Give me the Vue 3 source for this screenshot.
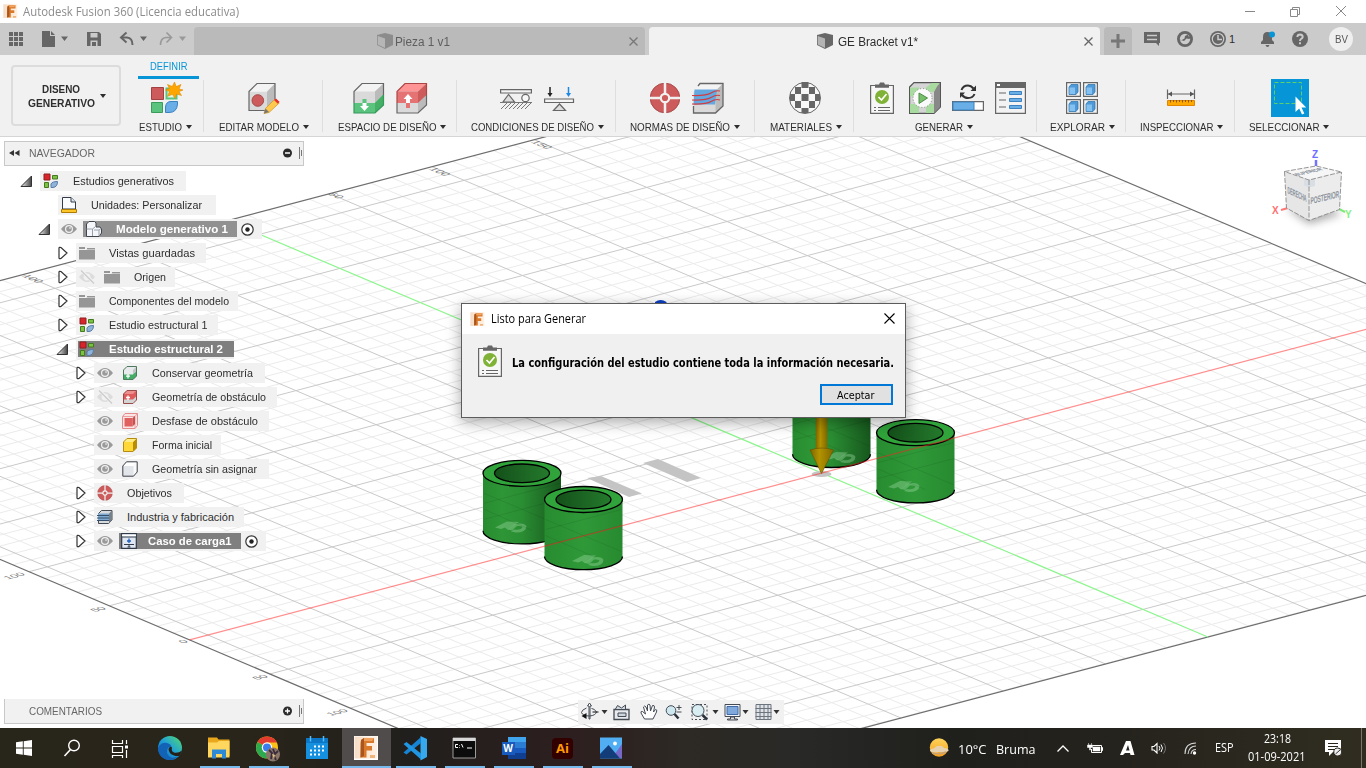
<script setup>
// Stretches a text run to an exact advance width while keeping its box in the flow.
const vFit = {
  mounted(el, { value }) {
    if (!value) return
    const natural = el.getBoundingClientRect().width
    el.style.display = 'inline-block'
    el.style.width = value + 'px'
    el.style.transformOrigin = '0 50%'
    el.style.transform = `scaleX(${value / natural})`
  },
}

const groups = [
  { label: 'ESTUDIO', w: 76, t: 43, dx: -0.5, icons: ['study'] },
  { label: 'EDITAR MODELO', w: 119, t: 80, dx: 1, icons: ['edit'] },
  { label: 'ESPACIO DE DISEÑO', w: 134, t: 98.5, dx: 2.5, icons: ['preserve', 'obstacle'] },
  { label: 'CONDICIONES DE DISEÑO', w: 159, t: 123, dx: 1, icons: ['support', 'load'] },
  { label: 'NORMAS DE DISEÑO', w: 139, t: 100, dx: 0, icons: ['target', 'manuf'] },
  { label: 'MATERIALES', w: 99, t: 62, dx: 1.5, icons: ['material'] },
  { label: 'GENERAR', w: 183, t: 48, dx: -1, icons: ['clip', 'generate', 'progress', 'status'] },
  { label: 'EXPLORAR', w: 89, t: 55, dx: 1.5, icons: ['explore'] },
  { label: 'INSPECCIONAR', w: 109, t: 73.5, dx: 1.5, icons: ['measure'] },
  { label: 'SELECCIONAR', w: 108, t: 70.5, dx: 0, icons: ['select'] },
]

const rows = [
  { x: 40, arrow: 'open', w: 146, icon: 'gen', text: 'Estudios generativos', t: 101 },
  { x: 58, w: 158, icon: 'doc', text: 'Unidades: Personalizar', t: 111 },
  { x: 58, arrow: 'open', w: 204, eye: 'eye', icon: 'assembly', text: 'Modelo generativo 1', t: 112, sel: 154, tone: 'mid', radio: true },
  { x: 76, arrow: 'closed', w: 130, icon: 'folder', text: 'Vistas guardadas', t: 86 },
  { x: 76, arrow: 'closed', w: 99, eye: 'eyeoff', icon: 'folder', text: 'Origen', t: 32 },
  { x: 76, arrow: 'closed', w: 162, icon: 'folder', text: 'Componentes del modelo', t: 120 },
  { x: 76, arrow: 'closed', w: 142, icon: 'gen', text: 'Estudio estructural 1', t: 98.5 },
  { x: 76, arrow: 'open', w: 158, icon: 'gen', text: 'Estudio estructural 2', t: 114, sel: 156, tone: 'dark', root: true },
  { x: 94, arrow: 'closed', w: 171, eye: 'eye', icon: 'tpreserve', text: 'Conservar geometría', t: 101 },
  { x: 94, arrow: 'closed', w: 183, eye: 'eyeoff', icon: 'tobstacle', text: 'Geometría de obstáculo', t: 114 },
  { x: 94, w: 175, eye: 'eye', icon: 'toffset', text: 'Desfase de obstáculo', t: 106 },
  { x: 94, w: 127, eye: 'eye', icon: 'tyellow', text: 'Forma inicial', t: 60 },
  { x: 94, w: 175, eye: 'eye', icon: 'twhite', text: 'Geometría sin asignar', t: 105 },
  { x: 94, arrow: 'closed', w: 90, icon: 'target', text: 'Objetivos', t: 45 },
  { x: 94, arrow: 'closed', w: 150, icon: 'tmanuf', text: 'Industria y fabricación', t: 107 },
  { x: 94, arrow: 'closed', w: 172, eye: 'eye', icon: 'tload', text: 'Caso de carga1', t: 83.5, sel: 122, tone: 'dark', radio: true, tight: true },
]

const apps = [
  { icon: 'edge' }, { icon: 'explorer', run: true }, { icon: 'chrome', run: true },
  { icon: 'calendar' }, { icon: 'fusion', run: true, active: true }, { icon: 'vscode', run: true },
  { icon: 'cmd', run: true }, { icon: 'word', run: true }, { icon: 'ai', run: true }, { icon: 'photos', run: true },
]

// Ground plane in viewport coordinates: O is the origin, U runs along the red axis, V along the green one.
const O = [821.7, 336]
const U = [102.3, -27]
const V = [80.3, 34.1]
const uMin = -6.18, uMax = 5.97, vMin = -7.4, vMax = 4.81
const at = (u, v) => [O[0] + u * U[0] + v * V[0], O[1] + u * U[1] + v * V[1]]
const seg = (a, b) => `M${a[0].toFixed(1)} ${a[1].toFixed(1)}L${b[0].toFixed(1)} ${b[1].toFixed(1)}`
let minor = ''
let major = ''
for (let i = -37; i <= 30; i++) {
  const k = i / 5
  if (k > uMin && k < uMax) {
    const s = seg(at(k, vMin), at(k, vMax))
    if (i % 5) minor += s
    else if (i) major += s
  }
  if (k > vMin && k < vMax) {
    const s = seg(at(uMin, k), at(uMax, k))
    if (i % 5) minor += s
    else if (i) major += s
  }
}
const edges = seg(at(uMin, vMin), at(uMax, vMin)) + seg(at(uMax, vMin), at(uMax, vMax)) +
  seg(at(uMax, vMax), at(uMin, vMax)) + seg(at(uMin, vMax), at(uMin, vMin))
const red = seg(at(uMin, 0), at(uMax, 0))
const green = seg(at(0, vMin), at(0, vMax))

const sideLabels = [
  { s: '100', x: 8, y: 442.5 }, { s: '50', x: 95, y: 475 }, { s: '0', x: 183, y: 506.5 },
  { s: '50', x: 257, y: 543 }, { s: '100', x: 331, y: 579 },
]
const topLabels = [
  { s: '100', x: 21, y: 139 }, { s: '50', x: 327, y: 57 }, { s: '100', x: 428, y: 32 }, { s: '150', x: 530, y: 5 },
]

const cylinders = [
  { x: 831.5, top: 257, bottom: 317.3, mx: 840, my: 321 },
  { x: 915.5, top: 295.7, bottom: 352.7, mx: 904, my: 350 },
  { x: 522, top: 336.3, bottom: 393.7, mx: 511, my: 390.5 },
  { x: 583.5, top: 362.5, bottom: 419.5, mx: 588, my: 424 },
]
const body = (c) => `M${c.x - 39} ${c.top}V${c.bottom}A39 13.2 0 0 0 ${c.x + 39} ${c.bottom}V${c.top}Z`
</script>

<template>
  <div class="app">
    <svg class="defs" width="0" height="0">
      <defs>
        <linearGradient id="cyl"><stop offset="0" stop-color="#278c30" /><stop offset=".25" stop-color="#2e9636" /><stop offset=".5" stop-color="#2a8d33" /><stop offset="1" stop-color="#17571d" /></linearGradient>
        <linearGradient id="cyl2"><stop offset="0" stop-color="#278c30" /><stop offset=".5" stop-color="#2f9938" /><stop offset="1" stop-color="#278a30" /></linearGradient>
        <linearGradient id="hole"><stop offset="0" stop-color="#14501a" /><stop offset="1" stop-color="#247a2c" /></linearGradient>
        <linearGradient id="gold"><stop offset="0" stop-color="#7d6500" /><stop offset=".4" stop-color="#b39300" /><stop offset="1" stop-color="#806700" /></linearGradient>
        <linearGradient id="edgeg" x1="0" y1="1" x2="1" y2="0"><stop offset="0" stop-color="#0f5fb5" /><stop offset=".5" stop-color="#1f9fd8" /><stop offset="1" stop-color="#54dc6c" /></linearGradient>
        <linearGradient id="tri" x1="0" x2="1"><stop offset="0" stop-color="#eee" /><stop offset="1" stop-color="#444" /></linearGradient>
        <linearGradient id="fus" x1="0" x2="1"><stop offset="0" stop-color="#f7dcc5" /><stop offset="1" stop-color="#fff1e4" /></linearGradient>
        <linearGradient id="sun" x1="0" y1="0" x2="0" y2="1"><stop offset="0" stop-color="#ffd35a" /><stop offset="1" stop-color="#f5a01d" /></linearGradient>
      </defs>
      <symbol id="caret" viewBox="0 0 6 4"><path d="M0 0H6L3 4Z" fill="currentColor" /></symbol>
      <symbol id="cubelet" viewBox="0 0 16 16"><path d="M0 2L8 0L16 2V12L8 16L0 12Z" fill="#686868" /><path d="M.7 3L8 5.500V15L.7 11.5Z" fill="#b4b4b4" /></symbol>
      <symbol id="study" viewBox="0 0 32 32">
        <path d="M.5 5.500h12v12h-12z" fill="#cd5b5b" stroke="#a34040" /><path d="M.5 20.500h11v10h-11z" fill="#5ac37d" stroke="#3a9c5a" /><path d="M15.500 6.500h10v10h-10z" fill="#dff5e5" stroke="#5ac37d" stroke-width="2" />
        <path d="M14.500 30.500V25Q15 19.500 20 19.500H26.500V22Q26 30.500 18 30.500Z" fill="#69aee6" stroke="#3c82c0" />
        <path d="M23.500 0l1.700 4.600L30 2.500l-2 4.500 4 1-4 1.500 2.500 4-5-1.500-1.500 4.500-2.500-4.200-5 2 2-4.800-4-1.500 4-1.500-2-4 4.800 2z" fill="#ffa500" stroke="#e08a00" stroke-width=".6" />
      </symbol>
      <symbol id="edit" viewBox="0 0 32 32">
        <path d="M1 9.500H19V28.500H1Z" fill="#dadada" /><path d="M1 9.500L9 1.500H27L19 9.500Z" fill="#f3f3f3" /><path d="M27 1.500V20L19 28.500V9.500Z" fill="#bbb" /><path d="M1 9.500L9 1.500H27V20L19 28.500H1Z" fill="none" stroke="#666" stroke-width="1.200" />
        <circle cx="9.800" cy="18.500" r="5.800" fill="#cd5b5b" stroke="#a34848" /><path d="M16 31.500L17.500 26.500L27 17L31.200 21L21 30.500Z" fill="#ffc94d" stroke="#d09a2a" stroke-width=".8" /><path d="M26 18l2-1.500 3.500 3.300-1.700 2z" fill="#e8302a" /><path d="M16 31.500l1.500-5 3.500 3.600z" fill="#777" />
      </symbol>
      <symbol id="preserve" viewBox="0 0 32 32">
        <path d="M1 9.500L9 1.500H30.500V23L22 31H1Z" fill="#dadada" /><path d="M1 9.500L9 1.500H30.500L22 9.500Z" fill="#f3f3f3" /><path d="M30.500 1.500V23L22 31V9.500Z" fill="#bbb" /><path d="M1 21H22L30.500 12.500V23L22 31H1Z" fill="#5ac37d" /><path d="M22 21L30.500 12.500V23L22 31Z" fill="#43b065" /><path d="M1 21V9.500L9 1.500H30.500V13" fill="none" stroke="#666" stroke-width="1.200" /><path d="M1 21V31H22L30.500 23V13" fill="none" stroke="#35995a" stroke-width="1.200" /><path d="M9.500 17h4v4h-4z" fill="#5ac37d" /><path d="M9.500 21h4v3h2.500l-4.500 5-4.500-5h2.500z" fill="#fff" />
      </symbol>
      <symbol id="obstacle" viewBox="0 0 32 32">
        <path d="M1 9.500L9 1.500H30.500V23L22 31H1Z" fill="#dadada" /><path d="M22 21L30.500 13V23L22 31Z" fill="#bbb" /><path d="M1 9.500L9 1.500H30.500L22 9.500Z" fill="#ff9494" /><path d="M1 9.500H22V21H1Z" fill="#e67373" /><path d="M30.500 1.500V13L22 21V9.500Z" fill="#cd5b5b" /><path d="M1 21V31H22L30.500 23V13" fill="none" stroke="#666" stroke-width="1.200" /><path d="M1 21V9.500L9 1.500H30.500V13" fill="none" stroke="#ad4545" stroke-width="1.200" /><path d="M10 21h4v5h-4z" fill="#e67373" /><path d="M10 21h4v-4h2.500L12 12l-4.500 5h2.500z" fill="#fff" />
      </symbol>
      <symbol id="support" viewBox="0 0 32 32"><path d="M.6 7.600H31.400V11H.6Z" fill="#f5f5f5" stroke="#666" stroke-width="1.200" /><path d="M8.500 12.500L3 20H14.500Z" fill="#ddd" stroke="#666" stroke-width="1.200" /><circle cx="25.500" cy="16" r="3.700" fill="#f8f8f8" stroke="#666" stroke-width="1.200" /><path d="M0 20.500H32M1 27l6-6M5 27l6-6M9 27l6-6M13 27l6-6M17 27l6-6M21 27l6-6M25 27l6-6" fill="none" stroke="#777" /></symbol>
      <symbol id="load" viewBox="0 0 32 32"><path d="M1.600 17H30.500V20.500H1.600Z" fill="#f5f5f5" stroke="#666" stroke-width="1.200" /><path d="M16.500 22L10.500 28.500H22.500Z" fill="#ddd" stroke="#666" stroke-width="1.200" /><path d="M7 5V12" stroke="#222" stroke-width="1.500" /><path d="M4.500 11h5l-2.500 4z" fill="#222" /><path d="M25.500 5V12" stroke="#1e88e5" stroke-width="1.500" /><path d="M23 11h5l-2.500 4z" fill="#1e88e5" /></symbol>
      <symbol id="target" viewBox="0 0 32 32"><circle cx="16" cy="16" r="14.800" fill="#cd5b5b" stroke="#a84a4a" stroke-width="1" /><path d="M16 0V32M0 16H32" stroke="#f1f1f1" stroke-width="2.500" /><circle cx="16" cy="16" r="4.200" fill="#cd5b5b" stroke="#f1f1f1" stroke-width="2.200" /></symbol>
      <symbol id="manuf" viewBox="0 0 32 32"><path d="M1.500 10L8 1.500H31V24L23.500 31H1.500Z" fill="#dadada" /><path d="M1.500 9L8 1.500H31L23.500 9Z" fill="#f3f3f3" /><path d="M23.500 9L31 1.500V24L23.500 31Z" fill="#bbb" /><path d="M6 4L8 1.500H31V24L23.500 31H1.500V24" fill="none" stroke="#666" stroke-width="1.300" /><path d="M2.500 7.500H25L23 22.500H1.500Z" fill="#64a8e0" /><path d="M0 13.500Q14 14 19 11T28 9M0 18Q14 18.500 19 15.500T28 13.500M0 22Q14 22.500 19 19.500T28 18" fill="none" stroke="#cf3d42" stroke-width="1.200" /></symbol>
      <symbol id="material" viewBox="0 0 32 32"><circle cx="16" cy="16" r="15.500" fill="#f7f7f7" stroke="#666" /><path d="M12.500 0h7v6h-7zM6 5h6v7H6zM20 5h6v7h-6zM1 12h5v7H1zM12.500 12h7v7h-7zM26 12h5v7h-5zM6 19h6v7H6zM20 19h6v7h-6zM12.500 26h7v5h-7z" fill="#666" /></symbol>
      <symbol id="clip" viewBox="0 0 32 32"><path d="M4.600 3.500H27.400V31.400H4.600Z" fill="#f7f7f7" stroke="#666" stroke-width="1.200" /><path d="M9 2.500h4l1-2h4l1 2h4v3.300H9z" fill="#666" /><circle cx="16" cy="15" r="7" fill="#7fb236" /><path d="M12.500 15l3 3 5-6" fill="none" stroke="#fff" stroke-width="1.700" /><path d="M8 25.500h2M8 28.500h2M12 25.500H24M12 28.500H24" stroke="#666" stroke-width="1.200" /></symbol>
      <symbol id="generate" viewBox="0 0 32 32"><path d="M.6 5L5 .6H31.400V25L25 31.400H.6Z" fill="#d5d5d5" stroke="#555" stroke-width="1.200" /><path d="M25 7L31 1V25L25 31Z" fill="#888" /><path d="M1 5.500h9v9H1zM17 5.500l6-4.500h7l-5 9h-8zM1 22h9v9H1zM17 22h8v9h-8z" fill="#a9dba0" /><circle cx="13.500" cy="16" r="9.500" fill="#fafafa" stroke="#888" stroke-dasharray="1 2" /><path d="M10 11L18.500 16L10 21.500Z" fill="#78bf6b" stroke="#4d8c44" /></symbol>
      <symbol id="progress" viewBox="0 0 32 32"><path d="M.6 19.600H31.400V28.400H.6Z" fill="#fff" stroke="#666" stroke-width="1.200" /><path d="M1 20H22V28H1Z" fill="#69aee6" stroke="#3c82c0" /><path d="M9.500 8Q11 3.500 16 3.500Q19 3.500 21.500 6.500M22.500 12Q21 16 16 16Q12.500 16 10 13" fill="none" stroke="#333" stroke-width="2" /><path d="M18.500 9h5.500V3.500zM13 10.500H8V16z" fill="#333" /></symbol>
      <symbol id="status" viewBox="0 0 32 32"><path d="M.6 .6H30.400V31.400H.6Z" fill="#f3f3f3" stroke="#666" stroke-width="1.200" /><path d="M0 0H31V6H0Z" fill="#666" /><path d="M2 2h3v2H2z" fill="#fff" /><path d="M4 11h7M4 18h7M4 25h7" stroke="#666" stroke-width="1.200" /><path d="M14.500 9.500h12v3h-12zM14.500 16.500h12v3h-12zM14.500 23.500h12v3h-12z" fill="#69aee6" stroke="#3c82c0" /></symbol>
      <symbol id="explore" viewBox="0 0 32 32"><g v-for="(p, i) in [[0, 0], [17, 0], [0, 17], [17, 17]]" :key="i" :transform="`translate(${p[0]} ${p[1]})`"><path d="M.6 .6H14.400V14.400H.6Z" fill="#f4f4f4" stroke="#666" stroke-width="1.200" /><path d="M3 5l2-2.500h7V10l-2 2.500H3z" fill="#4e9ad8" stroke="#3577b0" stroke-width=".8" /><path d="M3.500 5.500H9V12H3.500z" fill="#84c0f0" /></g></symbol>
      <symbol id="measure" viewBox="0 0 32 32"><path d="M2.500 7.500V17M29.500 7.500V17M3 12H29" stroke="#666" stroke-width="1.200" /><path d="M3 12l4-2.500v5zM29 12l-4-2.500v5z" fill="#555" /><path d="M2.500 18.500H29.500V23.500H2.500Z" fill="#ffa800" stroke="#e08600" /><path d="M5.500 18v2.500M8.500 18v2M11.500 18v2.500M14.500 18v2M17.500 18v2.500M20.500 18v2M23.500 18v2.500M26.500 18v2" stroke="#8a5a00" /></symbol>
      <symbol id="select" viewBox="0 0 38 38"><path d="M0 0H38V38H0Z" fill="#0696d7" /><path d="M3.500 3.500H30.500V24.500H3.500Z" fill="none" stroke="#5fd068" stroke-dasharray="4 2" /><path d="M24.500 17.500V33l3.700-3.500 2.800 6 2.300-1-2.800-6h4.700z" fill="#fff" /></symbol>

      <symbol id="gen" viewBox="0 0 16 16"><path d="M1 1h6v6h-6z" fill="#d8242a" stroke="#8c2020" /><path d="M9.500 2.500h5v3.500h-5z" fill="#7bc143" stroke="#467a20" /><path d="M1.500 9.500h4v5h-4z" fill="#7bc143" stroke="#467a20" /><path d="M8 14.500V11Q9 8.500 14.500 8.500Q14.500 14 10 14.500Z" fill="#8fb4dc" stroke="#5a7ca6" /></symbol>
      <symbol id="doc" viewBox="0 0 16 16"><path d="M1.500 .5H10L14.500 5V12H1.500Z" fill="#fafcff" stroke="#333d4a" /><path d="M10 .5V5H14.500" fill="#dce6f2" stroke="#333d4a" /><path d="M.5 12.500H15.500V15.500H.5Z" fill="#ffc629" stroke="#b07c00" /></symbol>
      <symbol id="assembly" viewBox="0 0 16 16"><path d="M.5 3L3 .5H8.500L10 2V6H14L15.500 8V12L13 15.500H.5Z" fill="#f4f6fa" stroke="#404650" /><path d="M.5 8H6.500V15M6.500 8L9 6M8 9H13L15 7.500M13 9V15" fill="none" stroke="#9aa0aa" /></symbol>
      <symbol id="folder" viewBox="0 0 16 16"><path d="M0 2H6V4H0ZM8 3H16V4H8ZM0 5H7L9 4.500H16V14.500H0Z" fill="#969696" /></symbol>
      <symbol id="eye" viewBox="0 0 16 16"><path d="M0 8Q8-2 16 8Q8 18 0 8Z" fill="#9a9a9a" /><circle cx="8" cy="8" r="4" fill="#f1f1f1" /><circle cx="8" cy="8" r="2.800" fill="#9a9a9a" /><circle cx="9" cy="7" r=".8" fill="#fff" /></symbol>
      <symbol id="eyeoff" viewBox="0 0 16 16"><path d="M0 8Q8-2 16 8Q8 18 0 8Z" fill="#dcdcdc" /><circle cx="8" cy="8" r="3.400" fill="#f1f1f1" /><path d="M2 1L15 14" stroke="#f1f1f1" stroke-width="3" /><path d="M2 1.500L15 14.500" stroke="#ccc" stroke-width="1.200" /></symbol>
      <symbol id="tpreserve" viewBox="0 0 16 16"><path d="M1.500 5L5 1.500H14.500V11L11 14.500H1.500Z" fill="#e8eaec" /><path d="M11 5L14.500 1.500V11L11 14.500Z" fill="#c2c4c6" /><path d="M1.500 9.500H11L14.500 6.500V11L11 14.500H1.500Z" fill="#45ad68" /><path d="M1.500 5L5 1.500H14.500V11L11 14.500H1.500Z" fill="none" stroke="#4b7a5c" /><path d="M6 9v4.500M4 11.200h4" stroke="#fff" stroke-width="1.200" /></symbol>
      <symbol id="tobstacle" viewBox="0 0 16 16"><path d="M1.500 5L5 1.500H14.500V11L11 14.500H1.500Z" fill="#d4d4d4" /><path d="M1.500 5L5 1.500H14.500V7L11 10.500H1.500Z" fill="#de5b5b" /><path d="M1.500 5L5 1.500H14.500L11 5Z" fill="#ee8d8d" /><path d="M1.500 5L5 1.500H14.500V11L11 14.500H1.500Z" fill="none" stroke="#9b4a4a" /><path d="M6 6.500v4.500M4 8.500h4" stroke="#fff" stroke-width="1.300" /></symbol>
      <symbol id="toffset" viewBox="0 0 16 16"><path d="M.5 3.500L3 .5H15.500V12.500L13 15.500H.5Z" fill="#fbe6e6" stroke="#e58a8a" /><path d="M.5 3.500H13V15.500M13 3.500L15.500 .5" fill="none" stroke="#e9a0a0" /><path d="M2.500 5H10.500V13.500H2.500Z" fill="#e06060" /><path d="M10.500 5L13 3V11L10.500 13.500Z" fill="#c85050" /></symbol>
      <symbol id="tyellow" viewBox="0 0 16 16"><path d="M1.500 5L5 1.500H14.500V11L11 14.500H1.500Z" fill="#ffd838" /><path d="M11 5L14.500 1.500V11L11 14.500Z" fill="#b88e00" /><path d="M1.500 5L5 1.500H14.500L11 5Z" fill="#ffec86" /><path d="M1.500 5L5 1.500H14.500V11L11 14.500H1.500Z" fill="none" stroke="#b38c10" /></symbol>
      <symbol id="twhite" viewBox="0 0 16 16"><path d="M.8 5L4.500 .8H15.200V11L11.500 15.200H.8Z" fill="#e2e5ea" /><path d="M.8 5L4.500 .8H15.200L11.500 5Z" fill="#fff" /><path d="M11.500 5L15.200 .8V11L11.500 15.200Z" fill="#fafafa" /><path d="M.8 5L4.500 .8H15.200V11L11.500 15.200H.8Z" fill="none" stroke="#3a3f47" /></symbol>
      <symbol id="tmanuf" viewBox="0 0 16 16"><path d="M1.500 4.500L4.500 1.500H15V11L11.500 14.500H1.500Z" fill="#d8dadd" stroke="#444b55" /><path d="M12 4.500L15 1.500V11L12 14.500Z" fill="#777f88" /><path d="M1 4.500H12V12H1Z" fill="#7fa8cf" /><path d="M0 6.500H12M0 9H12M0 11.500H12" stroke="#34506e" /></symbol>
      <symbol id="tload" viewBox="0 0 16 16"><path d="M.7 .7H15.300V15.300H.7Z" fill="#dfe7f2" stroke="#2f3a48" stroke-width="1.200" /><path d="M1 2.500H15" stroke="#fff" stroke-width="2" /><path d="M1 4H15" stroke="#2f3a48" /><path d="M8 5.500V10M6 8H10" fill="none" stroke="#1c5fc0" stroke-width="1.300" /><path d="M3 11.500H13M8 12V14M6.500 14H9.500" stroke="#2f3a48" fill="none" /></symbol>

      <symbol id="win" viewBox="0 0 32 32"><path d="M8 10.300L14.800 9.300V15.500H8ZM15.700 9.200L24 8V15.500H15.700ZM8 16.400H14.800V22.700L8 21.700ZM15.700 16.400H24V24L15.700 22.800Z" fill="#fff" /></symbol>
      <symbol id="search" viewBox="0 0 32 32"><circle cx="18" cy="13.500" r="5.300" fill="none" stroke="#fff" stroke-width="1.400" /><path d="M14.500 17.500L8.500 24" stroke="#fff" stroke-width="1.600" /></symbol>
      <symbol id="taskview" viewBox="0 0 32 32"><path d="M8.500 8V11.500H18.500V8M8.500 14.500H18.500V20.500H8.500ZM8.500 26V23.500H18.500V26M22.500 8V12M22.500 18V26" fill="none" stroke="#fff" stroke-width="1.200" /><path d="M21 13.500h3v3h-3z" fill="#fff" /></symbol>
      <symbol id="edge" viewBox="0 0 32 32"><circle cx="16" cy="16" r="12" fill="url(#edgeg)" /><path d="M4 16Q7 10 13 11Q17 12 17.500 15Q16 14 14 16Q11 21 16 25Q19 27 24 24Q21 28 16 28Q5 27.500 4 16Z" fill="#1262b5" /><path d="M14.500 17Q16 13.500 18 15.500Q17 19.500 20 20.500Q24 21.500 28 18.500L26 23.500Q23 24.500 20 23.500Q15 22 14.500 17Z" fill="#252119" /></symbol>
      <symbol id="explorer" viewBox="0 0 32 32"><path d="M5 5.500H14L15.500 7.500H26.500V24H5Z" fill="#e9a81c" /><path d="M5 10.500H14L16 9H26.500V25.500H5Z" fill="#ffd75e" /><path d="M9 26.500V17.500H23V26.500H19V22H13V26.500Z" fill="#2f8ad6" /></symbol>
      <symbol id="chrome" viewBox="0 0 32 32"><circle cx="15" cy="15.500" r="11" fill="#fbc116" /><path d="M15 15.500L5.500 10Q8.500 4.500 15 4.500Q22 4.500 25 10.500H15Z" fill="#e33b2e" /><path d="M15 15.500L5.500 10Q2 17 6.500 22.500Q10 26.500 14.500 26.500L19 18Z" fill="#2da94f" /><circle cx="15" cy="15.500" r="5.200" fill="#fff" /><circle cx="15" cy="15.500" r="4" fill="#3b7ded" /><circle cx="21" cy="22.500" r="7" fill="#8a7568" /><path d="M17 18l3 3-1 6M21 17l2 5 3-3M22 24l2 4" stroke="#392b3c" stroke-width="1.800" fill="none" /><path d="M20 22l3 1-1 4z" fill="#dec07e" /></symbol>
      <symbol id="calendar" viewBox="0 0 32 32"><path d="M5 6H27V27H5Z" fill="#1490df" /><path d="M5 6H27V11H5Z" fill="#0b75c6" /><path d="M9.500 4V9.500M22.500 4V9.500" stroke="#55bdf5" stroke-width="1.500" /><path d="M13 14.500h11M9 18.500h15M9 22.500h11" stroke="#fff" stroke-width="2" stroke-dasharray="2 2" /></symbol>
      <symbol id="fusion" viewBox="0 0 32 32"><path d="M4 4H28V28H4Z" fill="#fff" /><path d="M4.500 4.500H27V26.500H4.500Z" fill="url(#fus)" /><path d="M11 8L14 6H24V11H16.500V14H22V18.500H16.500V25.500H10.500V11Z" fill="#d9792b" /><path d="M11 8L14 6V24L10.500 25.500Z" fill="#a9551d" /><path d="M14 6H24L22 9H14Z" fill="#f2a25f" /><path d="M20 23h5v3h-5z" fill="#efb47c" /></symbol>
      <symbol id="vscode" viewBox="0 0 32 32"><path d="M21.500 4L28 7V25L21.500 28.500Z" fill="#35a8ee" /><path d="M22 5V11L7.500 22.500L4.500 20.500Z" fill="#1684d3" /><path d="M22 27.500V21.500L7.500 10L4.500 12Z" fill="#2196e3" /></symbol>
      <symbol id="cmd" viewBox="0 0 32 32"><path d="M5 6H27.500V26H5Z" fill="#0c0c0c" stroke="#9b9b9b" /><path d="M5 6H27.500V9H5Z" fill="#d9d9d9" /><path d="M7.500 12.500h2.500M7.500 12.500v3h2.500M11.500 13v.6M11.500 15v.6M13.500 12l1.500 3.500M19 16h5" stroke="#fff" fill="none" /></symbol>
      <symbol id="photos" viewBox="0 0 32 32"><path d="M5 5.500H27V26.500H5Z" fill="#51aef2" /><path d="M27 12V26H17Z" fill="#7767c9" /><path d="M5 22L13.500 13L25 26.500H5Z" fill="#133d78" /><circle cx="20" cy="11.500" r="1.900" fill="#fff" /></symbol>
    </svg>

    <header class="title-bar">
      <svg class="fusion-mini" viewBox="4 4 24 24"><use href="#fusion" width="32" height="32" /></svg>
      <span v-fit="216" class="title">Autodesk Fusion 360 (Licencia educativa)</span>
      <svg class="win-btns" width="120" height="20" viewBox="0 0 120 20" fill="none" stroke="#888"><path d="M5 9.500H15M50.500 7.500H57.500V14.500H50.500ZM52.500 7.500V5.500H59.500V12.500H57.500M96 4L106 14M106 4L96 14" /></svg>
    </header>

    <div class="tab-bar">
      <svg class="quick" width="194" height="32" viewBox="0 0 194 32">
        <path d="M9 9h4v4H9zM14 9h4v4h-4zM19 9h4v4h-4zM9 14h4v4H9zM14 14h4v4h-4zM19 14h4v4h-4zM9 19h4v4H9zM14 19h4v4h-4zM19 19h4v4h-4z" fill="#666" />
        <path d="M42 8h8v5h5v11H42zM51 8l4 4h-4z" fill="#666" /><path d="M61 13.500h7l-3.500 4.500zM140 13.500h7l-3.500 4.500z" fill="#666" />
        <path d="M87 9h12l2 2v12H87z" fill="#666" /><path d="M90.500 10h7v4.500h-7zM90.500 23v-5.500h7V23" fill="#cbcbcb" /><path d="M92 19h4v4h-4z" fill="#666" />
        <path d="M121 14.500H127Q132.500 15 132.500 22" fill="none" stroke="#666" stroke-width="2" /><path d="M126.500 9.500L121 14.500L126.500 19.500" fill="none" stroke="#666" stroke-width="2" />
        <g stroke="#999" fill="none" stroke-width="1.600"><path d="M171 14.500H166Q160.500 15 160.500 22M166.500 9.500L171.500 14.500L166.500 19.500" /></g><path d="M179 13.500h7l-3.500 4.500z" fill="#999" />
      </svg>
      <div class="tab inactive">
        <svg class="tab-cube" width="16" height="16"><use href="#cubelet" width="16" height="16" /></svg>
        <span v-fit="55" class="tab-name">Pieza 1 v1</span>
        <svg class="tab-x" width="9" height="9" viewBox="0 0 9 9"><path d="M.5 .5L8.500 8.500M8.500 .5L.5 8.500" stroke="#777" stroke-width="1.300" /></svg>
      </div>
      <div class="tab current">
        <svg class="tab-cube" width="16" height="16"><use href="#cubelet" width="16" height="16" /></svg>
        <span v-fit="80" class="tab-name">GE Bracket v1*</span>
        <svg class="tab-x" width="9" height="9" viewBox="0 0 9 9"><path d="M.5 .5L8.500 8.500M8.500 .5L.5 8.500" stroke="#666" stroke-width="1.300" /></svg>
      </div>
      <div class="tab-add"><svg width="14" height="14" viewBox="0 0 14 14"><path d="M7 0V14M0 7H14" stroke="#777" stroke-width="3" /></svg></div>
      <div class="status-icons">
        <svg class="s-chat" width="16" height="16" viewBox="0 0 16 16"><path d="M0 1H16V12H15V15L12 12H0Z" fill="#666" /><path d="M3 4.500H13M3 8.500H13" stroke="#cbcbcb" stroke-width="1.500" /></svg>
        <svg class="s-ext" width="16" height="16" viewBox="0 0 16 16"><circle cx="8" cy="8" r="6.600" fill="none" stroke="#666" stroke-width="2.800" /><path d="M1 8L7 10L9.500 7.500L12.500 8L14 5L11.500 5.500L11 3.500L8 5L7.500 7.500L4 9.500Z" fill="#666" /></svg>
        <svg class="s-clock" width="16" height="16" viewBox="0 0 16 16"><circle cx="8" cy="8" r="8" fill="#666" /><circle cx="8" cy="8" r="5.700" fill="none" stroke="#cbcbcb" stroke-width="1.200" /><path d="M8 4V8.500H12" fill="none" stroke="#cbcbcb" stroke-width="1.500" /></svg>
        <span class="count">1</span>
        <svg class="s-bell" width="17" height="16" viewBox="0 0 17 16"><path d="M1 13V11L3 9V6Q3 1 7.500 1Q12 1 12 6V9L14 11V13ZM5.500 14H9.500Q9 16 7.500 16Q6 16 5.500 14Z" fill="#666" /><circle cx="12" cy="3.500" r="3" fill="#0696d7" /></svg>
        <svg class="s-help" width="16" height="16" viewBox="0 0 16 16"><circle cx="8" cy="8" r="8" fill="#666" /><path d="M5.300 6Q5.500 3.500 8 3.500Q10.800 3.700 10.700 6Q10.500 7.200 9 8Q8 8.700 8 10" fill="none" stroke="#cbcbcb" stroke-width="1.900" /><path d="M7 11.200h2v2H7z" fill="#cbcbcb" /></svg>
        <span class="avatar"><span v-fit="13">BV</span></span>
      </div>
    </div>

    <div class="ribbon">
      <div class="workspace">
        <div class="ws-name"><span v-fit="38">DISENO</span><span v-fit="67">GENERATIVO</span></div>
        <svg class="caret" width="6" height="4"><use href="#caret" width="6" height="4" /></svg>
      </div>
      <div class="tools">
        <div class="define"><span v-fit="37.500">DEFINIR</span></div>
        <div class="groups">
          <div v-for="g in groups" :key="g.label" class="group" :style="{ width: g.w + 'px' }">
            <div class="group-icons">
              <svg v-for="i in g.icons" :key="i" :class="['tool', { big: i === 'select' }]"><use :href="'#' + i" width="100%" height="100%" /></svg>
            </div>
            <div class="group-label" :style="{ marginLeft: g.dx * 2 + 'px' }"><span v-fit="g.t">{{ g.label }}</span><svg class="caret" width="6" height="4"><use href="#caret" width="6" height="4" /></svg></div>
          </div>
        </div>
      </div>
    </div>

    <main class="viewport">
      <svg class="scene" width="1366" height="591" viewBox="0 0 1366 591">
        <path :d="minor" stroke="#ebebeb" />
        <path :d="major" stroke="#c9c9c9" />
        <path :d="edges" stroke="#6e6e6e" stroke-width="1.200" />
        <path d="M643 326L658 322L701 341L687 345Z" fill="#c4c4c4" /><path d="M587 341L601 339L642 356.500L629 360Z" fill="#c4c4c4" />
        <path :d="green" stroke="#8df58d" stroke-width="1.200" />
        <ellipse cx="821.500" cy="337" rx="10" ry="3" fill="#c4c4c4" />
        <g v-for="(c, i) in cylinders" :key="i">
          <path :d="body(c)" :fill="i % 2 ? 'url(#cyl2)' : 'url(#cyl)'" />
          <path :d="`M${c.x - 39} ${c.bottom}A39 13.200 0 0 0 ${c.x + 39} ${c.bottom}`" fill="none" stroke="#000" stroke-width="1.300" />
          <ellipse :cx="c.x" :cy="c.top" rx="39" ry="13" fill="#30a33a" stroke="#000" stroke-width="1.300" />
          <ellipse :cx="c.x" :cy="c.top" rx="27.500" ry="9.300" fill="url(#hole)" stroke="#000" stroke-width="1.300" />
          <g :transform="`translate(${c.mx} ${c.my})`" fill="#a4dca8" fill-opacity=".38"><path d="M-16 0L-4-6L8-5.500L0 0L-3 2.500L-6 0L-10 1.500Z" /><path d="M-3 2L4-3.500Q14-5 15.500-1Q15 5 5 5L0 4L3 2Q10 3 11.500-.5Q10-2 6-1.500L1 3Z" /></g>
          <path :d="`M${c.x - 38} ${c.top + 30}L${c.x + 38} ${c.top + 10}M${c.x - 38} ${c.top + 46}L${c.x + 38} ${c.top + 26}M${c.x - 38} ${c.top + 20}L${c.x + 38} ${c.top + 52}M${c.x - 38} ${c.top + 36}L${c.x + 10} ${c.top + 57}`" stroke="#000" stroke-opacity=".08" />
        </g>
        <path :d="red" stroke="#ff2020" stroke-opacity=".5" stroke-width="1.200" />
        <path d="M815.700 270H827.300V315H815.700Z" fill="url(#gold)" /><path d="M810 313Q822 309 833.500 313L821.500 336.500Z" fill="url(#gold)" stroke="#675300" stroke-width=".6" />
        <path d="M655 170V165Q660.500 161 666.500 165V170Z" fill="#0b3fc0" />
        <text v-for="(l, i) in sideLabels" :key="'s' + i" class="grid-label" :transform="`matrix(.9 -.24 .7 .3 ${l.x} ${l.y})`">{{ l.s }}</text>
        <text v-for="(l, i) in topLabels" :key="'t' + i" class="grid-label" :transform="`matrix(.85 .36 -.8 .22 ${l.x} ${l.y})`">{{ l.s }}</text>
      </svg>

      <svg class="viewcube" width="86" height="84" viewBox="1266 146 86 84">
        <defs><filter id="soft" x="-50%" y="-50%" width="200%" height="200%"><feGaussianBlur stdDeviation="4" /></filter></defs>
        <path d="M1286 208L1309 224L1342 214L1330 208Z" fill="#888" opacity=".7" filter="url(#soft)" />
        <path d="M1316 160V166" stroke="#7373ff" stroke-width="2.500" /><path d="M1281 210L1288 208" stroke="#ff7777" stroke-width="2" /><path d="M1339 209L1345 212" stroke="#7bea7b" stroke-width="2" />
        <path d="M1284.500 171.500L1316 166L1341.500 172L1309 180Z" fill="#f6f6f6" /><path d="M1284.500 171.500L1309 180V220.500L1286.500 208Z" fill="#e6e6e6" /><path d="M1309 180L1341.500 172L1339.500 209.500L1309 220.500Z" fill="#ececec" />
        <path d="M1304 178L1309 180L1315 178.500V186L1309 187.500L1304 185.500Z" fill="#d9dee4" />
        <path d="M1284.500 171.500L1316 166L1341.500 172L1309 180ZM1284.500 171.500L1286.500 208L1309 220.500L1339.500 209.500L1341.500 172M1309 180V220.500" fill="none" stroke="#8a8a8a" stroke-width=".9" stroke-dasharray="5 1.500" />
        <text class="face" transform="matrix(.43 .2 0 1 1287.500 193)">DERECHA</text><text class="face" transform="matrix(.54 -.13 0 1 1310.500 204)">POSTERIOR</text><text class="face" transform="matrix(.55 -.13 .5 .35 1297 176)">SUPERIOR</text>
        <text x="1312" y="158" class="axis z">Z</text><text x="1272" y="214" class="axis x">X</text><text x="1345" y="217.500" class="axis y">Y</text>
      </svg>

      <aside class="browser">
        <div class="panel-head">
          <svg class="collapse" width="11" height="6" viewBox="0 0 11 6"><path d="M5 0V6L0 3ZM10.500 0V6L5.500 3Z" fill="#333" /></svg>
          <span v-fit="66" class="panel-name">NAVEGADOR</span>
          <svg class="panel-btn" width="20" height="12" viewBox="0 0 20 12"><circle cx="4.500" cy="6" r="4.500" fill="#2b2b2b" /><path d="M2 6H7" stroke="#fff" stroke-width="1.500" /><path d="M16.500 0V12M18.500 3V9" stroke="#777" /></svg>
        </div>
        <div class="tree">
          <div v-for="r in rows" :key="r.text" class="row" :style="{ paddingLeft: r.x - 20 + 'px' }">
            <div class="twist">
              <svg v-if="r.arrow === 'closed'" width="13" height="14" viewBox="0 0 13 14"><path d="M3 2Q3 1 5 1.500L11 7L5 12.500Q3 13 3 12Z" fill="#fff" stroke="#333" stroke-width="1.200" /></svg>
              <svg v-else-if="r.arrow === 'open'" width="13" height="12" viewBox="0 0 13 12"><path d="M1 11.500L11.500 1V11.500Z" fill="url(#tri)" stroke="#333" /></svg>
            </div>
            <div class="node" :style="{ width: r.w + 'px' }">
              <svg v-if="r.eye" class="eye"><use :href="'#' + r.eye" width="16" height="16" /></svg>
              <div :class="['label', r.tone, { root: r.root, tight: r.tight }]" :style="{ width: r.sel ? r.sel + 'px' : 'auto' }">
                <svg class="node-icon"><use :href="'#' + r.icon" width="16" height="16" /></svg>
                <span v-fit="r.t">{{ r.text }}</span>
              </div>
              <svg v-if="r.radio" class="radio" width="13" height="13" viewBox="0 0 13 13"><circle cx="6.500" cy="6.500" r="5.700" fill="#fff" stroke="#333" stroke-width="1.200" /><circle cx="6.500" cy="6.500" r="2.200" fill="#222" /></svg>
            </div>
          </div>
        </div>
      </aside>

      <div class="panel-head comments">
        <span v-fit="73" class="panel-name">COMENTARIOS</span>
        <svg class="panel-btn" width="20" height="12" viewBox="0 0 20 12"><circle cx="4.500" cy="6" r="4.500" fill="#2b2b2b" /><path d="M2 6H7M4.500 3.500V8.500" stroke="#fff" stroke-width="1.300" /><path d="M16.500 0V12M18.500 3V9" stroke="#777" /></svg>
      </div>

      <div class="view-tools">
        <svg width="206" height="24" viewBox="578.500 700 206 24" fill="none" stroke="#444b55">
          <path d="M589.500 719V706H588L590 703L592 706H590.500V719Z" fill="#fff" /><path d="M587 708Q582 710 582 712.500Q583 716 590 716Q596 715.500 597 712Q595 708.500 592 708.500" /><path d="M582 716l5-3v6z" fill="#111" stroke="none" /><path d="M593 712h6" stroke="#111" />
          <g fill="#333" stroke="none"><path d="M602 710h6l-3 4zM713 710h6l-3 4zM743 710h6l-3 4zM774 710h6l-3 4z" /></g>
          <path d="M614.500 709.500H629.500V719.500H614.500Z" fill="#e8eaed" stroke-width="1.300" /><path d="M616 709L618 705.500L622 708L626 705V709M618.500 713H626.500V716.500H618.500Z" fill="#cfd5dc" />
          <path d="M645 719L641.500 713Q641 711 643 711.500L646 714L644 707Q645 705 646.500 707L648 711L648 705Q649.500 703.500 650.500 705L651 711L653 705.500Q655 705 655 707L654 712L656 709.500Q658 709.500 657 712L653.500 719Z" fill="#fff" />
          <circle cx="671.500" cy="710.500" r="4.800" fill="#cfe8f0" /><path d="M675 714L679 718.500" stroke="#29323c" stroke-width="2.500" /><path d="M679.500 705v5M677 707.500h5M677 712h5" />
          <path d="M692.500 704.500H707.500V719.500H692.500Z" stroke-dasharray="2 2" /><circle cx="698.500" cy="710.500" r="6" fill="#d9eef3" /><path d="M703 715L707.500 719.500" stroke="#29323c" stroke-width="2.500" />
          <path d="M725.500 704.500H740.500V716.500H725.500Z" fill="#f3f5f8" /><path d="M727.500 706.500H738.500V714.500H727.500Z" fill="#7fa8dc" stroke="#3e6ba8" /><path d="M731 717h4v2h3v1h-10v-1h3z" fill="#ddd" />
          <path d="M756.500 704.500H771.500V719.500H756.500ZM756 708.500H772M756 712.500H772M756 716.500H772M760.500 704V720M764.500 704V720M768.500 704V720" fill="#dfe3e8" stroke="#6c747e" />
        </svg>
      </div>

      <section class="dialog">
        <div class="dlg-title">
          <svg class="fusion-mini" viewBox="4 4 24 24"><use href="#fusion" width="32" height="32" /></svg>
          <span v-fit="95">Listo para Generar</span>
          <svg class="dlg-x" width="11" height="11" viewBox="0 0 11 11"><path d="M.5 .5L10.500 10.500M10.500 .5L.5 10.500" stroke="#000" stroke-width="1.100" /></svg>
        </div>
        <div class="dlg-body">
          <svg class="dlg-icon" width="32" height="32"><use href="#clip" width="32" height="32" /></svg>
          <strong v-fit="382" class="dlg-msg">La configuración del estudio contiene toda la información necesaria.</strong>
        </div>
        <div class="dlg-foot"><button><span v-fit="37.500">Aceptar</span></button></div>
      </section>
    </main>

    <footer class="taskbar">
      <div v-for="i in ['win', 'search', 'taskview']" :key="i" class="sys"><svg width="32" height="32"><use :href="'#' + i" width="32" height="32" /></svg></div>
      <div v-for="a in apps" :key="a.icon" :class="['task', { run: a.run, active: a.active }]">
        <span v-if="a.icon === 'ai'" class="ai">Ai</span>
        <span v-else-if="a.icon === 'word'" class="word"><span>W</span></span>
        <svg v-else width="32" height="32"><use :href="'#' + a.icon" width="32" height="32" /></svg>
      </div>
      <div class="tray">
        <svg class="weather" width="20" height="20" viewBox="0 0 20 20"><circle cx="10" cy="9.500" r="9.200" fill="url(#sun)" /><path d="M1 13Q1 10 5 10.500Q7 7 11 8Q14 7.500 15 10Q20 10 19.500 13Q15 15 10 14Q4 15.500 1 13Z" fill="#e6d2b0" /><path d="M3 15Q10 17 17 14" stroke="#c9a273" stroke-width="1.500" fill="none" /></svg>
        <span v-fit="28.500" class="temp">10°C</span><span v-fit="39.500" class="cond">Bruma</span>
        <div class="slot"><svg width="12" height="7" viewBox="0 0 12 7"><path d="M.5 6.500L6 1L11.500 6.500" fill="none" stroke="#fff" stroke-width="1.300" /></svg></div>
        <div class="slot"><svg width="16" height="11" viewBox="0 0 16 11"><path d="M5.500 2.500H14.500V9.500H4.500V6" fill="none" stroke="#fff" /><path d="M6 4H13V8H6ZM15 4.500H16V7.500H15ZM1.500 0V2M4.500 0V2M.5 2H5.500V4.500H.5ZM2.500 4.500H3.500V7H2.500Z" fill="#fff" stroke="#fff" stroke-width=".5" /></svg></div>
        <div class="slot"><svg width="15" height="14" viewBox="0 0 15 14"><path d="M6 0H10.500L14.500 14H10.500L10 12H5L3 14H0ZM8 4L6 9.500H9.500Z" fill="#fff" fill-rule="evenodd" /></svg></div>
        <div class="slot"><svg width="16" height="12" viewBox="0 0 16 12"><path d="M1 4.500H3L6 1.500V11L3 8H1Z" fill="none" stroke="#fff" stroke-width="1.100" /><path d="M8 4Q10 6 8 8.500M10 2.500Q13 6 10 10" fill="none" stroke="#fff" /><path d="M12.500 1Q16.500 6 12.500 11.500" fill="none" stroke="#777" /></svg></div>
        <div class="slot"><svg width="14" height="14" viewBox="0 0 14 14"><path d="M1 13Q1 2 12 2M4 13Q5 5 12 5M7 13Q7.500 8.500 12 8.500" fill="none" stroke="#d4d4d4" stroke-width="1.100" /><circle cx="10.500" cy="12" r="1.700" fill="#fff" /></svg></div>
        <div class="lang"><span v-fit="18.500">ESP</span></div>
        <div class="clock"><span v-fit="27">23:18</span><span v-fit="57.500">01-09-2021</span></div>
        <div class="notif"><svg width="17" height="16" viewBox="0 0 17 16"><path d="M0 0H16V12H8L4 16V12H0Z" fill="#fff" /><path d="M3 3.500H13M3 6.500H13M3 9.500H9" stroke="#28251b" stroke-width="1.200" /><circle cx="12.800" cy="12" r="4" fill="#eee" stroke="#28251b" /><path d="M10.500 14l4.500-4" stroke="#333" /></svg></div>
        <div class="peek"></div>
      </div>
    </footer>
  </div>
</template>

<style>
html, body { margin: 0; overflow: hidden; background: #fff; }
</style>

<style scoped>
* { box-sizing: border-box; }
.app { width: 1366px; height: 768px; display: flex; flex-direction: column; font: 11px/14px "Liberation Sans", Arial, sans-serif; color: #2e2e2e; overflow: hidden; }
span, strong { white-space: nowrap; }
svg { display: block; flex: none; }
.defs { position: absolute; }
.fusion-mini { width: 15px; height: 15px; }
.title-bar { height: 23px; display: flex; align-items: center; padding: 0 8px 0 3px; background: #fff; }
.title { margin-left: 5px; font: 12px/20px "Open Sans", "Noto Sans", sans-serif; color: #8c8c8c; }
.win-btns { margin-left: auto; margin-right: -2px; }
.tab-bar { height: 32px; background: #cbcbcb; display: flex; align-items: flex-end; }
.tab { height: 28px; display: flex; align-items: center; border-radius: 4px 4px 0 0; }
.inactive { width: 451px; margin-right: 4px; padding: 0 7px 0 183px; background: #bababa; color: #5e5e5e; }
.inactive .tab-cube { opacity: .55; }
.current { width: 451px; padding: 0 7px 0 168px; background: #f1f1f1; }
.tab-name { margin-left: 2px; padding-top: 1px; font-size: 12px; }
.current .tab-name { margin-left: 5px; }
.tab-x { margin-left: auto; }
.tab-add { width: 28px; height: 28px; margin-left: 4px; border-radius: 4px 4px 0 0; background: #bababa; display: grid; place-items: center; }
.status-icons { flex: 1; height: 32px; display: flex; align-items: center; padding-left: 12px; }
.s-ext { margin-left: 17px; }
.s-clock { margin-left: 17px; }
.count { width: 8px; margin-left: 3px; }
.s-bell { margin-left: 23px; }
.s-help { margin-left: 15px; }
.avatar { width: 24px; height: 24px; margin-left: 21px; border-radius: 50%; background: #efefef; display: grid; place-items: center; color: #555; }
.ribbon { height: 82px; background: #f1f1f1; border-bottom: 1px solid #d5d5d5; display: flex; }
.workspace { width: 110px; height: 61px; margin: 10px 7px 0 11px; border: 2px solid #dcdcdc; border-radius: 4px; display: flex; align-items: center; justify-content: center; padding-left: 1px; font-weight: bold; }
.ws-name { display: flex; flex-direction: column; align-items: center; width: 68px; }
.caret { margin-left: 4px; color: #2e2e2e; }
.workspace .caret { margin-left: 5px; }
.define { width: 61px; height: 24px; margin-left: 10px; padding-top: 4px; border-bottom: 3px solid #0696d7; color: #0696d7; text-align: center; }
.groups { display: flex; }
.group { height: 52px; margin-top: 1px; display: flex; flex-direction: column; align-items: center; border-right: 1px solid #dedede; }
.group:last-child { border-right: 0; }
.group-icons { display: flex; flex: none; gap: 11px; height: 38px; margin-top: -1px; padding-left: 2px; align-items: center; }
.tool { width: 32px; height: 32px; }
.tool.big { width: 38px; height: 38px; }
.group-label { display: flex; flex: none; align-items: center; margin-top: 3px; }
.viewport { height: 591px; position: relative; background: #fff; overflow: hidden; }
.scene { position: absolute; inset: 0; fill: none; }
.grid-label { font: 12px "Liberation Sans", sans-serif; fill: #777; }
.viewcube { position: absolute; left: 1266px; top: 9px; }
.face { font: 9px "Liberation Sans", sans-serif; fill: #858d98; stroke: #858d98; stroke-width: .3px; }
.axis { font: bold 10px "Liberation Sans", sans-serif; }
.z { fill: #6d6dff; } .x { fill: #ff7070; } .y { fill: #80f080; }
.browser { position: absolute; left: 0; top: 4px; width: 310px; }
.panel-head { width: 300px; height: 25px; margin-left: 4px; display: flex; align-items: center; padding: 0 0 1px 4px; background: #f1f1f1; border: 1px solid #c8c8c8; color: #666; }
.panel-name { margin-left: 9px; }
.panel-btn { margin-left: auto; }
.tree { padding-top: 3px; }
.row { height: 24px; display: flex; align-items: center; }
.twist { width: 20px; }
.node { height: 20px; display: flex; align-items: center; background: #f1f1f1; }
.eye { width: 16px; height: 16px; margin: 0 6px 0 3px; }
.label { height: 20px; display: flex; align-items: center; }
.node-icon { width: 16px; height: 16px; margin: 0 14px 0 3px; }
.label.mid, .label.dark { height: 16px; background: #919191; color: #fff; font-weight: bold; }
.label.dark { background: #7f7f7f; }
.label.root { margin-left: 2px; }
.root .node-icon { margin-left: 1px; }
.tight .node-icon { margin: 0 11px 0 2px; }
.radio { margin-left: 4px; }
.comments { position: absolute; left: 0; top: 562px; padding: 0 0 0 15px; border-top: 0; }
.view-tools { position: absolute; left: 578px; top: 563px; background: #f1f1f1; }
.dialog { position: absolute; left: 461px; top: 166px; width: 445px; height: 115px; background: #f0f0f0; border: 1px solid #5c5c5c; box-shadow: 0 4px 14px rgba(0, 0, 0, .35); color: #000; }
.dlg-title { height: 30px; background: #fff; display: flex; align-items: center; padding: 0 10px 0 8px; font: 12px/18px "Open Sans", "Noto Sans", sans-serif; }
.dlg-title span { margin-left: 6px; }
.dlg-x { margin-left: auto; margin-top: -2px; }
.dlg-body { height: 50px; display: flex; align-items: center; padding: 4px 0 0 12px; }
.dlg-msg { margin: 3px 0 0 6px; font: bold 11.500px/14px "DejaVu Sans", sans-serif; }
.dlg-foot { display: flex; justify-content: flex-end; padding-right: 12px; }
.dlg-foot button { width: 73px; height: 21px; padding: 1px 2px 0 0; border: 2px solid #0078d7; background: #e1e1e1; color: #000; font: 11px/15px "DejaVu Sans", sans-serif; }
.taskbar { height: 40px; display: flex; background: linear-gradient(90deg, #28251a 0, #29251a 18%, #211f1d 30%, #2d1f1f 42%, #2d2924 50%, #292927 58%, #1f1f1c 70%, #25231d 82%, #302d20 100%); color: #fff; font-family: "Open Sans", "Noto Sans", sans-serif; }
.sys { width: 48px; display: grid; place-items: center; }
.sys:nth-child(3) { width: 50px; padding-right: 2px; }
.task { width: 49px; display: grid; place-items: center; position: relative; }
.task.run::after { content: ""; position: absolute; left: 5px; right: 4px; bottom: 0; height: 2px; background: #76b9ed; }
.task.active { background: #514c4c; }
.task.active::after { left: 0; right: 0; }
.task svg { margin-right: 1px; }
.ai { width: 21px; height: 21px; border-radius: 4px; background: #330000; color: #ff9a00; font: bold 13px/20px "Open Sans", sans-serif; text-align: center; }
.word { width: 24px; height: 22px; background: linear-gradient(#41a5ee 0 25%, #2b7cd3 25% 50%, #185abd 50% 75%, #103f91 75%); display: flex; align-items: center; background-size: 18px 100%; background-position: right; background-repeat: no-repeat; }
.word span { width: 13px; height: 13px; background: #185abd; font: bold 10px/13px "Open Sans", sans-serif; text-align: center; }
.tray { margin-left: auto; display: flex; align-items: center; height: 40px; }
.weather { margin-right: -1px; }
.temp, .cond { font-size: 13.500px; line-height: 20px; margin-left: 10px; margin-top: 1px; }
.cond { margin-right: 11.500px; }
.slot { width: 32px; display: grid; place-items: center; }
.lang { width: 34px; text-align: center; font-size: 12px; }
.clock { width: 72px; display: flex; flex-direction: column; align-items: center; gap: 1px; font-size: 12px; line-height: 17px; margin-top: -1px; }
.notif { width: 40px; display: grid; place-items: center; }
.peek { width: 13px; height: 40px; background: linear-gradient(90deg, transparent 8px, #77756c 8px, #77756c 9px, transparent 9px); }
</style>
